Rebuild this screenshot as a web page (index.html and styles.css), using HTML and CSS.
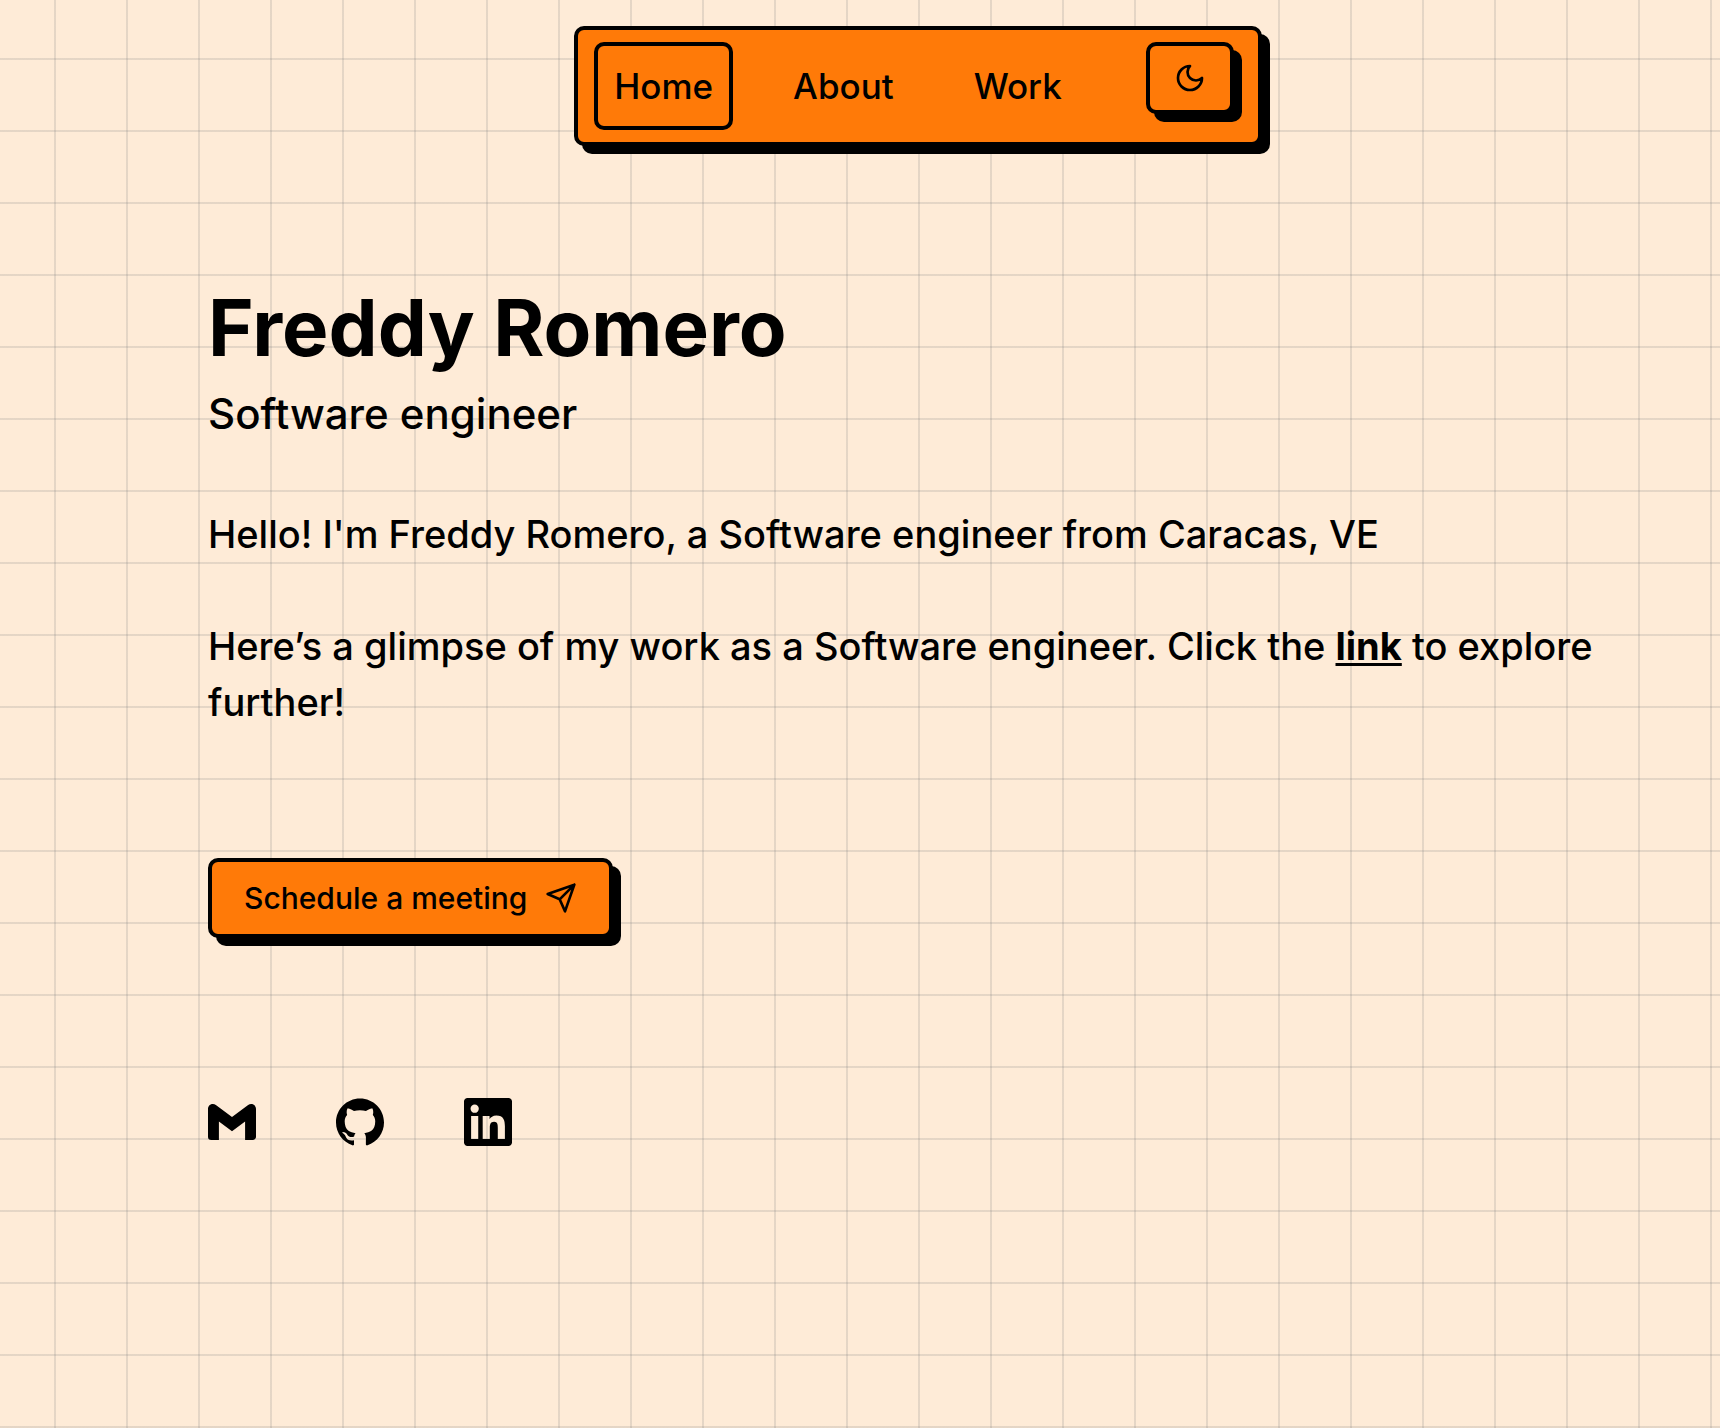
FILE: index.html
```html
<!DOCTYPE html>
<html lang="en">
<head>
<meta charset="utf-8">
<meta name="viewport" content="width=device-width, initial-scale=1">
<title>Freddy Romero</title>
<link rel="stylesheet" href="styles.css">
</head>
<body>
<header class="header">
  <nav class="nav" aria-label="Main">
    <a class="nav-link nav-link-active" href="#home" aria-current="page">Home</a>
    <a class="nav-link" href="#about">About</a>
    <a class="nav-link" href="#work">Work</a>
    <button class="theme-button" type="button" aria-label="Switch to dark theme">
      <svg class="icon" viewBox="0 0 24 24" aria-hidden="true"><path d="M12 3a6 6 0 0 0 9 9 9 9 0 1 1-9-9Z"/></svg>
    </button>
  </nav>
</header>
<main class="content">
  <h1 class="name">Freddy Romero</h1>
  <p class="role">Software engineer</p>
  <div class="intro">
    <p class="intro-text">Hello! I'm Freddy Romero, a Software engineer from Caracas, VE</p>
    <p class="intro-text">Here’s a glimpse of my work as a Software engineer. Click the <a class="intro-link" href="#work">link</a> to explore further!</p>
  </div>
  <button class="meeting-button" type="button">
    Schedule a meeting
    <svg class="icon" viewBox="0 0 24 24" aria-hidden="true"><path d="m22 2-7 20-4-9-9-4ZM22 2 11 13"/></svg>
  </button>
  <div class="socials">
    <a class="social-link" href="#email" aria-label="Email">
      <svg class="logo" viewBox="0 0 24 24" aria-hidden="true"><path d="M24 5.457v13.909c0 .904-.732 1.636-1.636 1.636h-3.819V11.73L12 16.64l-6.545-4.91v9.273H1.636A1.636 1.636 0 0 1 0 19.366V5.457c0-2.023 2.309-3.178 3.927-1.964L5.455 4.64 12 9.548l6.545-4.91 1.528-1.145C21.69 2.28 24 3.434 24 5.457z"/></svg>
    </a>
    <a class="social-link" href="#github" aria-label="GitHub">
      <svg class="logo" viewBox="0 0 24 24" aria-hidden="true"><path d="M12 .297c-6.63 0-12 5.373-12 12 0 5.303 3.438 9.8 8.205 11.385.6.113.82-.258.82-.577 0-.285-.01-1.04-.015-2.04-3.338.724-4.042-1.61-4.042-1.61C4.422 18.07 3.633 17.7 3.633 17.7c-1.087-.744.084-.729.084-.729 1.205.084 1.838 1.236 1.838 1.236 1.07 1.835 2.809 1.305 3.495.998.108-.776.417-1.305.76-1.605-2.665-.3-5.466-1.332-5.466-5.93 0-1.31.465-2.38 1.235-3.22-.135-.303-.54-1.523.105-3.176 0 0 1.005-.322 3.3 1.23.96-.267 1.98-.399 3-.405 1.02.006 2.04.138 3 .405 2.28-1.552 3.285-1.23 3.285-1.23.645 1.653.24 2.873.12 3.176.765.84 1.23 1.91 1.23 3.22 0 4.61-2.805 5.625-5.475 5.92.42.36.81 1.096.81 2.22 0 1.606-.015 2.896-.015 3.286 0 .315.21.69.825.57C20.565 22.092 24 17.592 24 12.297c0-6.627-5.373-12-12-12"/></svg>
    </a>
    <a class="social-link" href="#linkedin" aria-label="LinkedIn">
      <svg class="logo" viewBox="0 0 24 24" aria-hidden="true"><path d="M20.447 20.452h-3.554v-5.569c0-1.328-.027-3.037-1.852-3.037-1.853 0-2.136 1.445-2.136 2.939v5.667H9.351V9h3.414v1.561h.046c.477-.9 1.637-1.85 3.37-1.85 3.601 0 4.267 2.37 4.267 5.455v6.286zM5.337 7.433a2.062 2.062 0 0 1-2.063-2.065 2.064 2.064 0 1 1 2.063 2.065zm1.782 13.019H3.555V9h3.564v11.452zM22.225 0H1.771C.792 0 0 .774 0 1.729v20.542C0 23.227.792 24 1.771 24h20.451C23.2 24 24 23.227 24 22.271V1.729C24 .774 23.2 0 22.222 0h.003z"/></svg>
    </a>
  </div>
</main>
</body>
</html>
```
FILE: styles.css
```css
* {
  box-sizing: border-box;
}

html {
  min-height: 100%;
  background-color: #feebd7;
  background-image:
    linear-gradient(to right, #80808033 2px, transparent 2px),
    linear-gradient(to bottom, #80808033 2px, transparent 2px);
  background-size: 72px 72px;
  background-position: 54px 58px;
}

body {
  margin: 0;
  padding: 26px 92px 64px 208px;
  color: #000;
  font-family: Inter, "Open Sans", sans-serif;
  font-weight: 500;
}

.header {
  display: flex;
  justify-content: center;
}

.nav {
  display: flex;
  align-items: flex-start;
  gap: 40px;
  padding: 12px 24px 12px 16px;
  border: 4px solid #000;
  border-radius: 10px;
  background: #ff7a08;
  box-shadow: 8px 8px 0 #000;
}

.nav-link {
  padding: 16px;
  border: 4px solid transparent;
  border-radius: 10px;
  color: inherit;
  font-size: 35px;
  line-height: 48px;
  text-decoration: none;
}

.nav-link-active {
  border-color: #000;
}

.theme-button,
.meeting-button {
  display: flex;
  align-items: center;
  justify-content: center;
  border: 4px solid #000;
  border-radius: 10px;
  background: #ff7a08;
  box-shadow: 8px 8px 0 #000;
  color: #000;
  font: inherit;
  cursor: pointer;
}

.theme-button {
  width: 88px;
  height: 72px;
  margin-left: 24px;
  padding: 0;
}

.icon {
  width: 32px;
  height: 32px;
  fill: none;
  stroke: #000;
  stroke-width: 2;
  stroke-linecap: round;
  stroke-linejoin: round;
}

.name {
  margin: 138px 0 0;
  font-size: 78px;
  font-weight: 700;
  line-height: 88px;
}

.role {
  margin: 12px 0 0;
  font-size: 42px;
  line-height: 60px;
}

.intro {
  display: flex;
  flex-direction: column;
  gap: 56px;
  margin-top: 62px;
}

.intro-text {
  margin: 0;
  font-size: 38px;
  line-height: 56px;
}

.intro-link {
  color: inherit;
  font-weight: 700;
  text-decoration-thickness: 3px;
  text-underline-offset: 3px;
}

.meeting-button {
  gap: 18px;
  height: 80px;
  margin-top: 128px;
  padding: 0 32px;
  font-size: 30px;
}

.socials {
  display: flex;
  gap: 80px;
  margin-top: 160px;
}

.social-link {
  display: block;
  color: inherit;
}

.logo {
  display: block;
  width: 48px;
  height: 48px;
  fill: currentColor;
}
```
